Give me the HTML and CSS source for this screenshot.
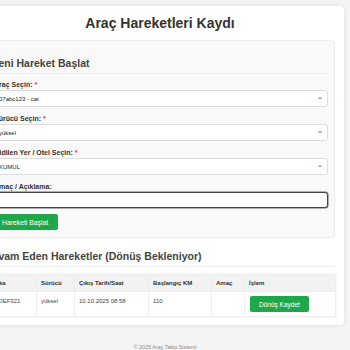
FILE: index.html
```html
<!DOCTYPE html>
<html lang="tr">
<head>
<meta charset="UTF-8"/>
<title>Araç Hareketleri Kaydı</title>
<link rel="stylesheet" href="styles.css">
</head>
<body>
<div class="container">
	<h1>Araç Hareketleri Kaydı</h1>
	<div class="formSection">
		<h2>Yeni Hareket Başlat</h2>
		<div class="group">
			<label>Araç Seçin: <span class="req">*</span></label>
			<div class="select"><span>07abc123 - cat</span><span class="arrow">&#8964;</span></div>
		</div>
		<div class="group">
			<label>Sürücü Seçin: <span class="req">*</span></label>
			<div class="select"><span>yüksel</span><span class="arrow">&#8964;</span></div>
		</div>
		<div class="group">
			<label>Gidilen Yer / Otel Seçin: <span class="req">*</span></label>
			<div class="select"><span>KUMUL</span><span class="arrow">&#8964;</span></div>
		</div>
		<div class="group last">
			<label>Amaç / Açıklama:</label>
			<div class="textInput"></div>
		</div>
		<button class="btn">Hareketi Başlat</button>
	</div>
	<h2 class="listTitle">Devam Eden Hareketler (Dönüş Bekleniyor)</h2>
	<table class="moves">
		<colgroup><col class="cPlate"><col class="cDriver"><col class="cDate"><col class="cKm"><col class="cPurpose"><col class="cAction"></colgroup>
		<tr><th>Plaka</th><th>Sürücü</th><th>Çıkış Tarih/Saat</th><th>Başlangıç KM</th><th>Amaç</th><th>İşlem</th></tr>
		<tr><td>34 DEF321</td><td>yüksel</td><td>10.10.2025 08:58</td><td>110</td><td></td><td><button class="btn small">Dönüş Kaydet</button></td></tr>
	</table>
</div>
<div class="footer">© 2025 Araç Takip Sistemi</div>
</body>
</html>
```
FILE: styles.css
```css
html, body { margin: 0; }
body { background: #f4f4f4; font-family: 'Liberation Sans', Arial, sans-serif; color: #333; overflow: hidden; height: 350px; }

.container {
	box-sizing: border-box; width: 368px; margin: 6px 0 0 -24px;
	padding: 8px 9px 8px; background: #fff; border-radius: 4px;
	box-shadow: 0 0 5px rgba(0,0,0,0.1);
}
h1 { margin: 0 0 8px; font-size: 14px; line-height: 18px; text-align: center; color: #333; }
h2 {
	margin: 6px 0 6px; padding-bottom: 3px; border-bottom: 1px solid #eee;
	font-size: 10.5px; line-height: 13px; color: #444;
}
.formSection {
	padding: 10px 6px 7px; background: #f9f9f9; border: 1px solid #ececec; border-radius: 4px;
}
.group { margin-bottom: 7px; }
.group.last { margin-bottom: 6px; }
label { display: block; font-size: 7px; line-height: 9px; font-weight: bold; color: #333; margin-bottom: 1px; padding-left: 2px; }
.req { color: #e53935; }
.select, .textInput {
	box-sizing: border-box; height: 17px; background: #fff; border: 1px solid #ddd; border-radius: 3px;
	display: flex; align-items: center; justify-content: space-between; padding: 0 4px 0 6px;
	font-size: 6px; color: #222;
}
.arrow { font-size: 7px; line-height: 7px; margin-top: -4px; color: #333; }
.textInput { height: 16px; border: 1px solid #444; box-shadow: 0 0 0 0.5px #666; }
.btn {
	display: block; height: 16px; padding: 0 10px; border: 0; border-radius: 2px;
	background: #1fa84a; color: #fff; font-family: inherit; font-size: 6.8px;
}
.listTitle { margin-top: 12px; margin-bottom: 7px; }
.moves {
	width: 350px; table-layout: fixed; border-collapse: collapse;
	box-shadow: 0 0 3px rgba(0,0,0,0.08);
}
.cPlate { width: 51px; } .cDriver { width: 38px; } .cDate { width: 74px; }
.cKm { width: 63px; } .cPurpose { width: 33px; } .cAction { width: 91px; }
.moves th, .moves td {
	border: 1px solid #eee; text-align: left; vertical-align: top;
	font-size: 6px; line-height: 8px; padding: 4px 4px; color: #333;
}
.moves th { background: #f2f2f2; font-weight: bold; height: 7px; }
.moves td { height: 16px; padding-top: 5px; padding-bottom: 3px; color: #444; }
.moves td:last-child { padding-top: 4px; }
.btn.small { padding: 0 9px; height: 16px; font-size: 6.5px; margin-left: 1px; }
.footer { text-align: center; font-size: 5.4px; line-height: 7px; color: #888; margin-top: 19px; padding-right: 20px; }
```
